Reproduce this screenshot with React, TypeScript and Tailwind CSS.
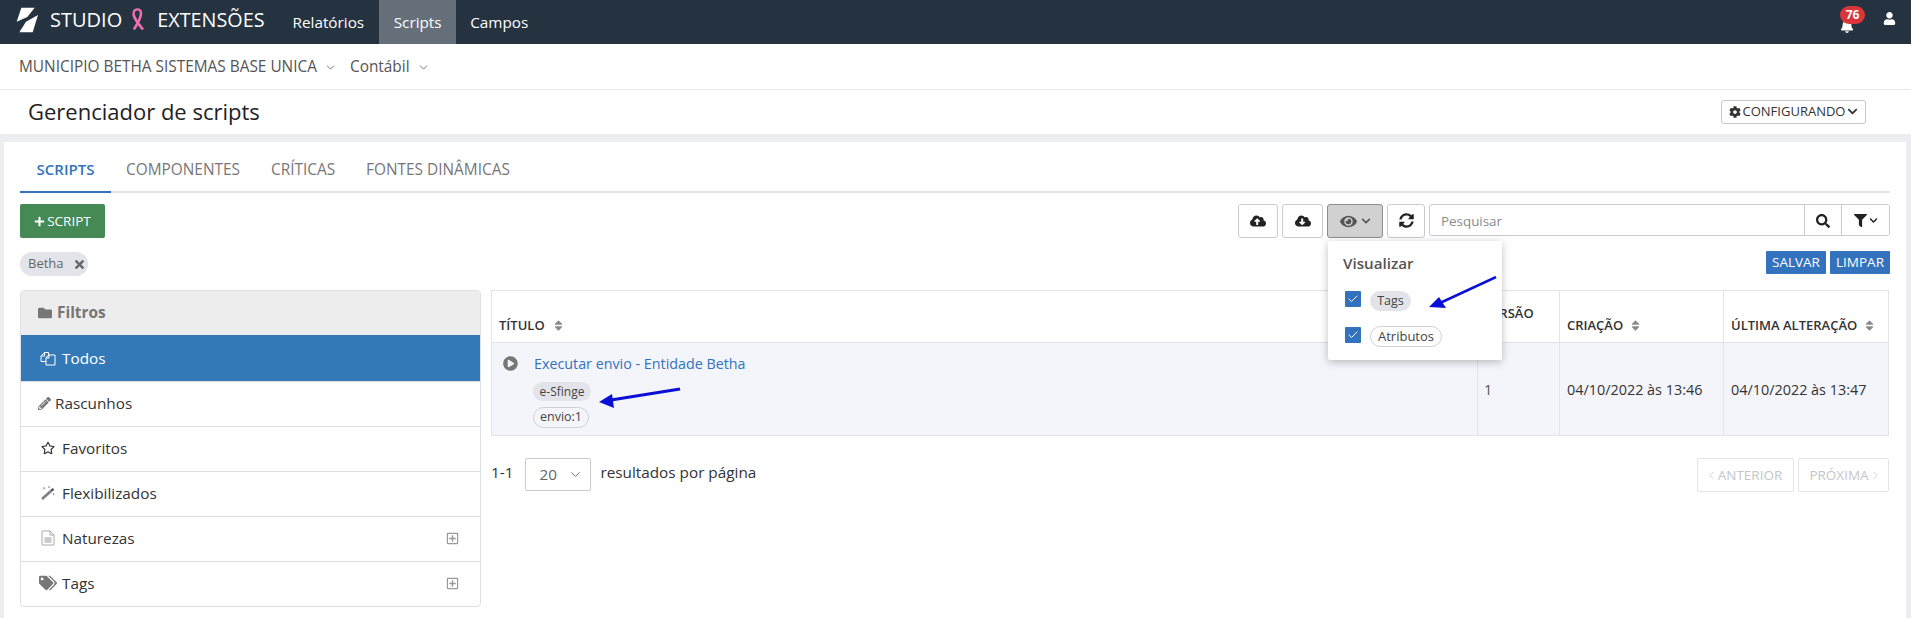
import React from "react";
import {
  FaCloudUploadAlt, FaCloudDownloadAlt, FaEye, FaSyncAlt, FaSearch, FaFilter, FaChevronDown,
  FaFolder, FaPencilAlt, FaTags, FaPlayCircle, FaCog, FaBell, FaUser, FaTimes, FaSort,
  FaRegStar, FaRegPlusSquare, FaPlus,
} from "react-icons/fa";
import { Check, ChevronDown, ChevronLeft, ChevronRight } from "lucide-react";

const Logo = () => (
  <svg width="26" height="30" viewBox="0 0 78 90" className="shrink-0 -ml-[2px]">
    <path d="M22 8 H62 L40 36 L8 50 Z" fill="#fff" />
    <path d="M72 30 L56 82 H16 L36 50 Z" fill="#fff" />
  </svg>
);

const Ribbon = () => (
  <svg width="22" height="28" viewBox="0 0 22 28" fill="none" className="shrink-0">
    <path d="M6.5 9 C7 14 11 18 16 24.5" stroke="#ee6fb0" strokeWidth="2.6" />
    <path d="M14 8 C14 14 11 17 7 24.5" stroke="#ee6fb0" strokeWidth="2.6" />
    <path d="M6.5 9 C6.5 3, 14 3, 14 8" stroke="#ee6fb0" strokeWidth="2.4" />
  </svg>
);

const TodosIcon = () => (
  <svg width="16" height="16" viewBox="0 0 16 16" fill="none" stroke="#fff" strokeWidth="1" className="shrink-0">
    <path d="M6 11.5 H1 V6 L4.5 2.5 H8.5 V5" />
    <path d="M1 6 H4.5 V2.5" />
    <path d="M6 15 V7.5 L9 5 H15 V15 Z" />
    <path d="M6 8 H9 V5" />
  </svg>
);

const WandIcon = () => (
  <svg width="14" height="14" viewBox="0 0 14 14" fill="none" className="shrink-0">
    <path d="M1 13 L10 5" stroke="#808080" strokeWidth="2.6" />
    <path d="M10 5 L12.5 2.8" stroke="#555" strokeWidth="2.4" />
    <path d="M3 1 V3.5 M1.8 2.2 H4.2 M8 0 V2 M7 1 H9 M12.5 7 V9 M11.5 8 H13.5" stroke="#999" strokeWidth="0.8" />
  </svg>
);

const FileIcon = () => (
  <svg width="14" height="16" viewBox="0 0 14 16" fill="none" className="shrink-0">
    <path d="M1 1 H9 L13 5 V15 H1 Z" stroke="#aaa" strokeWidth="1" fill="#fff" />
    <path d="M9 1 V5 H13" stroke="#aaa" strokeWidth="1" />
    <path d="M3.5 8 H10.5 M3.5 10 H10.5 M3.5 12 H10.5" stroke="#999" strokeWidth="1" />
  </svg>
);

const Arrow = ({ className, w, h, d, tip, sw }: { className: string; w: number; h: number; d: string; tip: string; sw: number }) => (
  <svg width={w} height={h} viewBox={`0 0 ${w} ${h}`} className={className}>
    <path d={d} stroke="#0a0fd6" strokeWidth={sw} fill="none" />
    <path d={tip} fill="#0a0fd6" />
  </svg>
);

const Sort = ({ className = "" }: { className?: string }) => <FaSort className={`text-[#8a8a8a] text-[13px] shrink-0 ${className}`} />;

const ToolBtn = ({ className, children }: { className: string; children: React.ReactNode }) => (
  <button className={`h-[34px] flex items-center justify-center rounded-[3px] border border-[#c9cbcf] bg-white text-[#222] ${className}`}>
    {children}
  </button>
);

const rows: { icon: React.ReactNode; label: string; expand?: boolean; cls: string }[] = [
  { icon: <FaPencilAlt className="text-[13px] text-[#777]" />, label: "Rascunhos", cls: "pl-[17px] gap-[4px]" },
  { icon: <FaRegStar className="text-[14px] w-[14px] text-[#333]" />, label: "Favoritos", cls: "pl-[20px] gap-[7px]" },
  { icon: <WandIcon />, label: "Flexibilizados", cls: "pl-[20px] gap-[7px]" },
  { icon: <FileIcon />, label: "Naturezas", expand: true, cls: "pl-[20px] gap-[7px]" },
  { icon: <FaTags className="text-[16px] w-[18px] text-[#777]" />, label: "Tags", expand: true, cls: "pl-[18px] gap-[5px]" },
];

export default function App() {
  return (
    <div className="min-h-[618px] bg-[#ebedf1] font-['Open_Sans','Liberation_Sans',sans-serif] text-[15.3px] text-[#333] overflow-hidden">
      {/* Top bar */}
      <header className="h-[44px] bg-[#253240] flex items-stretch pl-[16px] pr-[15px] text-white">
        <div className="flex items-center">
          <span className="mb-[4px]"><Logo /></span>
          <span className="ml-[10px] text-[20px] leading-none mb-[4px]">STUDIO</span>
          <span className="ml-[5px] mb-[6px]"><Ribbon /></span>
          <span className="ml-[8px] text-[19.8px] leading-none mb-[4px]">EXTENSÕES</span>
        </div>
        <nav className="flex ml-[13px] text-[15.3px]">
          <a className="px-[15px] flex items-center">Relatórios</a>
          <a className="w-[77px] flex items-center justify-center bg-[#646f7a]">Scripts</a>
          <a className="pl-[14px] flex items-center">Campos</a>
        </nav>
        <div className="ml-auto flex items-center gap-[29px]">
          <div className="relative mt-[4px]">
            <FaBell className="text-[14px] mt-[4px]" />
            <span className="absolute -top-[9px] left-0 h-[18px] w-[25px] text-center rounded-full bg-[#d9363a] text-[12px] font-bold leading-[18px]">76</span>
          </div>
          <FaUser className="text-[13px] -mt-[7px]" />
        </div>
      </header>

      {/* Context bar */}
      <div className="h-[46px] bg-white border-b border-[#e9eaed] flex items-center pl-[19px] text-[15.4px] text-[#555]">
        <span>MUNICIPIO BETHA SISTEMAS BASE UNICA</span>
        <ChevronDown size={13} strokeWidth={1.5} className="ml-[7px] mt-[1px]" />
        <span className="ml-[13px]">Contábil</span>
        <ChevronDown size={13} strokeWidth={1.5} className="ml-[7px] mt-[1px]" />
      </div>

      {/* Title bar */}
      <div className="h-[44px] bg-white flex items-center pl-[28px] pr-[45px] justify-between">
        <h1 className="text-[22px] leading-none text-[#222] mb-[2px]">Gerenciador de scripts</h1>
        <button className="h-[24px] w-[145px] flex items-center justify-center gap-[2px] border border-[#c4c6ca] rounded-[3px] text-[13px] text-[#333] mb-[1px]">
          <FaCog className="text-[12px]" /> CONFIGURANDO <FaChevronDown className="text-[11px]" />
        </button>
      </div>

      {/* Card */}
      <main className="relative mt-[8px] ml-[4px] w-[1902px] h-[476px] bg-white pl-[16px] pr-[16px]">
        {/* Tabs */}
        <div className="flex h-[51px] border-b-2 border-[#e3e4e9] text-[15.4px] text-[#777]">
          <a className="w-[91px] -mb-[2px] border-b-2 border-[#3372bd] flex items-center justify-center pt-[6px] text-[#3372bd] font-semibold text-[15px]">SCRIPTS</a>
          <a className="ml-[15px] flex items-center pt-[6px]">COMPONENTES</a>
          <a className="ml-[31px] flex items-center pt-[6px]">CRÍTICAS</a>
          <a className="ml-[31px] flex items-center pt-[6px]">FONTES DINÂMICAS</a>
        </div>

        {/* Toolbar */}
        <div className="flex items-start mt-[11px]">
          <button className="w-[85px] h-[34px] rounded-[2px] bg-[#458a55] text-white text-[13.5px] flex items-center justify-center gap-[2px]">
            <FaPlus className="text-[11px]" /> SCRIPT
          </button>
          <div className="ml-auto flex items-start gap-[4px]">
            <ToolBtn className="w-[40px]"><FaCloudUploadAlt className="text-[16px] -mt-[1px]" /></ToolBtn>
            <ToolBtn className="w-[41px]"><FaCloudDownloadAlt className="text-[16px] -mt-[1px]" /></ToolBtn>
            <div className="relative">
              <ToolBtn className="w-[56px] !bg-[#d1d1d1] !border-[#8d8d8d] gap-[4px] text-[#555]">
                <FaEye className="text-[17px]" /><FaChevronDown className="text-[10px]" />
              </ToolBtn>
              {/* Dropdown */}
              <div className="absolute z-10 left-[1px] top-[37px] w-[174px] h-[119px] bg-white rounded-[2px] shadow-[0_2px_8px_rgba(0,0,0,0.25)] pl-[15px] pt-[13px]">
                <div className="text-[15.2px] font-semibold text-[#555] leading-[19px]">Visualizar</div>
                <div className="flex items-start gap-[9px] mt-[18px] ml-[2px]">
                  <span className="w-[16px] h-[16px] bg-[#3372bd] rounded-[1px] flex items-center justify-center"><Check size={12} strokeWidth={2} className="text-white" /></span>
                  <span className="h-[20px] w-[41px] rounded-full bg-[#e3e4e9] text-[12.5px] flex items-center justify-center text-[#444]">Tags</span>
                </div>
                <div className="flex items-start gap-[9px] mt-[15px] ml-[2px]">
                  <span className="w-[16px] h-[16px] mt-[1px] bg-[#3372bd] rounded-[1px] flex items-center justify-center"><Check size={12} strokeWidth={2} className="text-white" /></span>
                  <span className="h-[21px] w-[72px] rounded-full border border-[#cfd0d4] text-[13px] flex items-center justify-center text-[#444]">Atributos</span>
                </div>
                <Arrow className="absolute left-[100px] top-[35px]" w={70} h={34} sw={2.5}
                  d="M68 1 L12 27" tip="M1 31 L11 21 L18 32 Z" />
              </div>
            </div>
            <ToolBtn className="w-[38px]"><FaSyncAlt className="text-[15px] -mt-[1px]" /></ToolBtn>
            <div className="w-[461px] h-[32px] flex items-stretch border border-[#c9cbcf] rounded-[3px]">
              <span className="flex-1 pl-[11px] pt-[2px] flex items-center text-[13.4px] text-[#8a8a8a]">Pesquisar</span>
              <span className="w-[37px] pt-[1px] border-l border-[#c9cbcf] flex items-center justify-center text-[#222]"><FaSearch className="text-[14px]" /></span>
              <span className="w-[48px] pt-[1px] border-l border-[#c9cbcf] flex items-center justify-center text-[#222]"><FaFilter className="text-[13px]" /><FaChevronDown className="text-[9px] ml-[2px]" /></span>
            </div>
          </div>
        </div>

        {/* Chips row */}
        <div className="flex items-start mt-[14px] h-[38px]">
          <span className="h-[24px] w-[68px] rounded-full bg-[#e3e4e9] flex items-center pl-[8px] text-[13px] text-[#666]">
            Betha <FaTimes className="ml-[9px] text-[13px]" />
          </span>
          <div className="ml-auto flex gap-[4px] -mt-[1px]">
            <button className="w-[60px] h-[23px] rounded-[1px] bg-[#3372bd] text-white text-[13.5px]">SALVAR</button>
            <button className="w-[60px] h-[23px] rounded-[1px] bg-[#3372bd] text-white text-[13.5px]">LIMPAR</button>
          </div>
        </div>

        {/* Body */}
        <div className="flex items-start gap-[10px]">
          {/* Filters */}
          <aside className="w-[461px] h-[317px] border border-[#dedfe3] rounded-[4px] overflow-hidden shrink-0">
            <div className="h-[44px] pb-[1px] bg-[#ededed] flex items-center pl-[17px] gap-[5px] font-bold text-[#777] text-[15.4px]">
              <FaFolder className="text-[14px]" /> Filtros
            </div>
            <div className="h-[46px] bg-[#3479b7] text-white flex items-center pl-[19px] gap-[6px]">
              <TodosIcon /> Todos
            </div>
            {rows.map((r) => (
              <div key={r.label} className={`h-[45px] pb-[2px] border-t border-[#dedfe3] flex items-center pr-[21px] ${r.cls}`}>
                {r.icon}<span>{r.label}</span>
                {r.expand && <FaRegPlusSquare className="ml-auto text-[13px] text-[#999]" />}
              </div>
            ))}
          </aside>

          {/* Table + pagination */}
          <section className="flex-1 pr-[1px]">
            <div className="relative">
              <table className="w-full table-fixed border-collapse text-[14.4px]">
                <colgroup>
                  <col />
                  <col className="w-[82px]" />
                  <col className="w-[164px]" />
                  <col className="w-[165px]" />
                </colgroup>
                <thead>
                  <tr className="h-[52px] text-[#333] text-[13px]">
                    <th className="border border-[#e3e4e9] align-bottom text-left pl-[7px] pb-[7px] font-semibold">
                      <span className="flex items-center gap-[7px]">TÍTULO <Sort /></span>
                    </th>
                    <th className="border border-[#e3e4e9] align-bottom text-left pl-[6px] pb-[4px] font-semibold">VERSÃO<Sort className="mt-[2px]" /></th>
                    <th className="border border-[#e3e4e9] align-bottom text-left pl-[7px] pb-[7px] font-semibold">
                      <span className="flex items-center gap-[6px]">CRIAÇÃO <Sort /></span>
                    </th>
                    <th className="border border-[#e3e4e9] align-bottom text-left pl-[7px] pb-[7px] font-semibold">
                      <span className="flex items-center gap-[6px] whitespace-nowrap">ÚLTIMA ALTERAÇÃO <Sort /></span>
                    </th>
                  </tr>
                </thead>
                <tbody>
                  <tr className="h-[93px] bg-[#f4f5fa]">
                    <td className="border border-[#e3e4e9] pl-[11px] align-top pt-[12px]">
                      <div className="flex items-start">
                        <FaPlayCircle className="text-[15px] text-[#777] mt-[1px] shrink-0" />
                        <div className="ml-[15px] -mt-[1px]">
                          <a className="text-[#3372bd] ml-[1px] block leading-[19px] text-[14.3px]">Executar envio - Entidade Betha</a>
                          <span className="mt-[9px] flex items-center justify-center w-[58px] h-[19px] rounded-full bg-[#e3e4e9] text-[12px] text-[#444]">e-Sfinge</span>
                          <span className="mt-[6px] flex items-center justify-center w-[56px] h-[21px] rounded-full border border-[#cfd0d4] text-[12.5px] text-[#444]">envio:1</span>
                        </div>
                      </div>
                    </td>
                    <td className="border border-[#e3e4e9] pl-[6px] pt-[2px] text-[#555]">1</td>
                    <td className="border border-[#e3e4e9] pl-[7px] pt-[2px] whitespace-nowrap">04/10/2022 às 13:46</td>
                    <td className="border border-[#e3e4e9] pl-[7px] pt-[2px] whitespace-nowrap">04/10/2022 às 13:47</td>
                  </tr>
                </tbody>
              </table>
              <Arrow className="absolute left-[107px] top-[95px]" w={84} h={26} sw={3}
                d="M82 4 L13 15" tip="M1 17 L14 9 L16 23 Z" />
            </div>

            <div className="flex items-start mt-[22px]">
              <span className="mt-[5px] leading-[19px]">1-1</span>
              <span className="ml-[12px] w-[66px] h-[33px] border border-[#c9cbcf] rounded-[2px] flex items-center pl-[13px] text-[#666]">
                20 <ChevronDown size={15} strokeWidth={1.5} className="ml-[11px]" />
              </span>
              <span className="ml-[9px] mt-[5px] leading-[19px]">resultados por página</span>
              <div className="ml-auto flex gap-[4px] text-[13.5px] text-[#c4c6ca]">
                <button className="w-[97px] h-[34px] pr-[4px] border border-[#e3e4e9] rounded-[2px] flex items-center justify-center"><ChevronLeft size={13} strokeWidth={1.5} />ANTERIOR</button>
                <button className="w-[91px] h-[34px] pl-[4px] border border-[#e3e4e9] rounded-[2px] flex items-center justify-center">PRÓXIMA<ChevronRight size={13} strokeWidth={1.5} /></button>
              </div>
            </div>
          </section>
        </div>
      </main>
    </div>
  );
}
